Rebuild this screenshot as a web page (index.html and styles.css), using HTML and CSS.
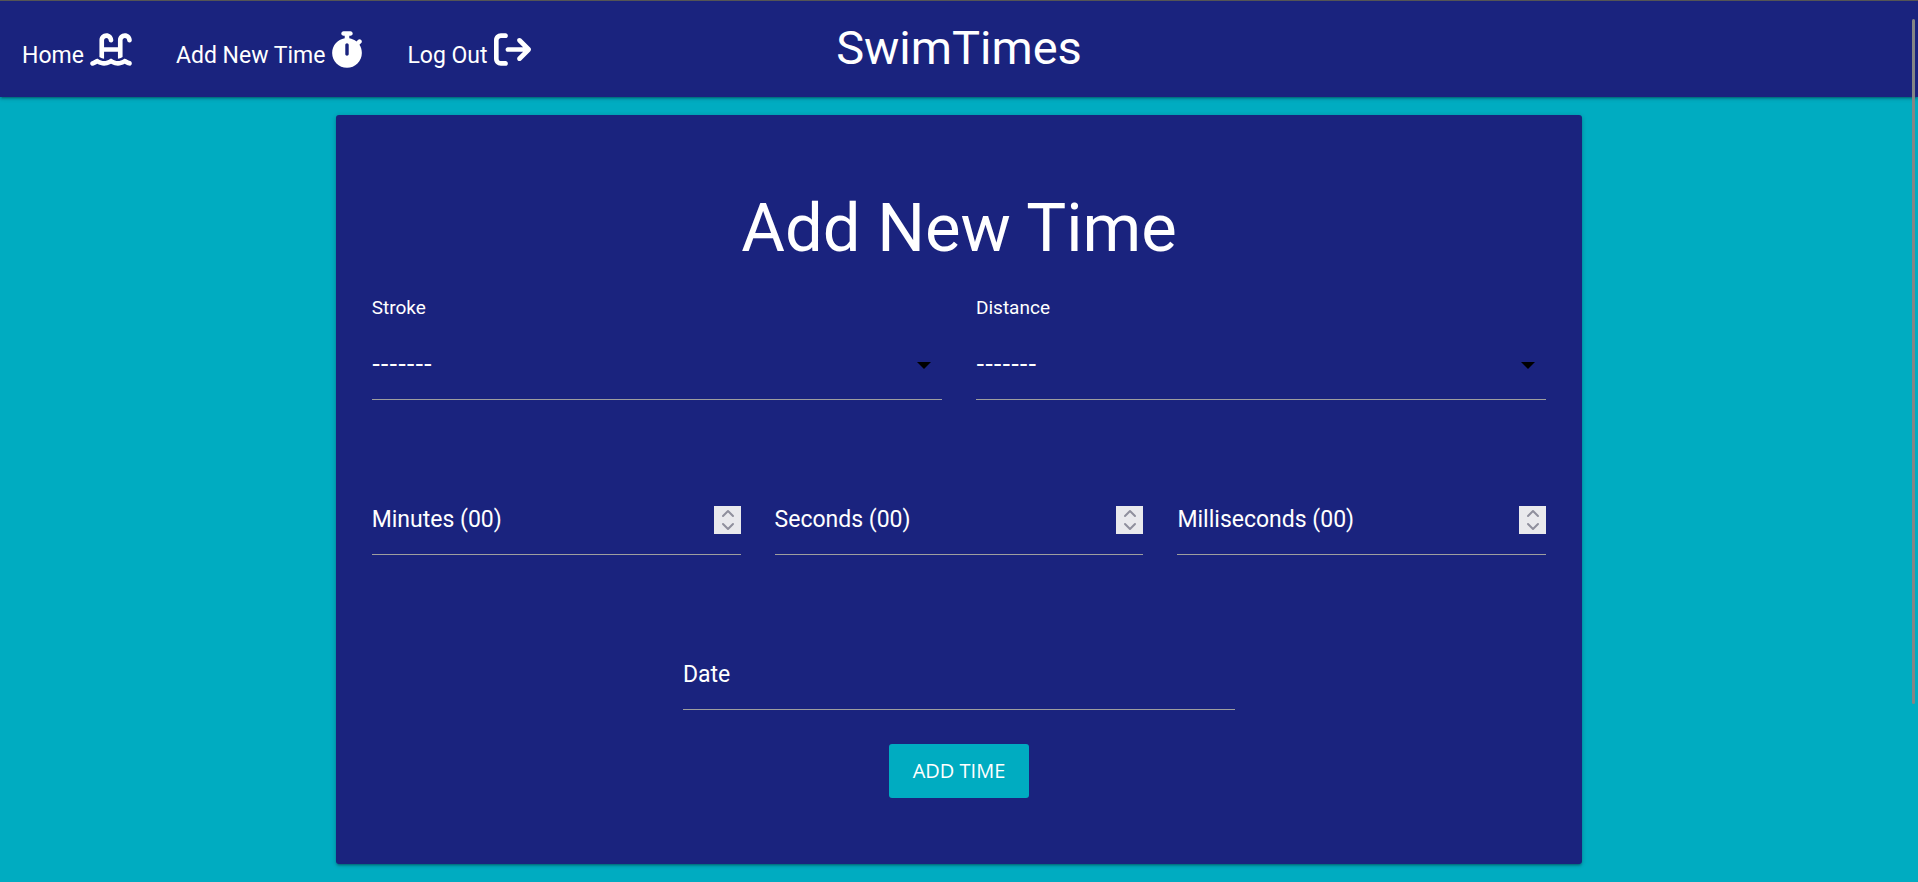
FILE: index.html
```html
<!DOCTYPE html>
<html lang="en">
<head>
<meta charset="utf-8">
<meta name="viewport" content="width=device-width, initial-scale=1">
<title>SwimTimes</title>
<link rel="stylesheet" href="styles.css">
</head>
<body>
<header class="navbar">
  <nav class="nav-links">
    <a href="#home">Home
      <svg class="icon icon-pool" viewBox="0 0 576 512" aria-hidden="true"><path d="M128 127.7C128 74.9 170.9 32 223.7 32c48.3 0 89 36 95 83.9l1 8.2c2.2 17.5-10.2 33.5-27.7 35.7s-33.5-10.2-35.7-27.7l-1-8.2c-2-15.9-15.5-27.9-31.5-27.9c-17.5 0-31.7 14.2-31.7 31.7V224H384V127.7C384 74.9 426.9 32 479.7 32c48.3 0 89 36 95 83.9l1 8.2c2.2 17.5-10.2 33.5-27.7 35.7s-33.5-10.2-35.7-27.7l-1-8.2c-2-15.9-15.5-27.9-31.5-27.9c-17.5 0-31.7 14.2-31.7 31.7V361c-1.6 1-3.3 2-4.8 3.1c-18 12.4-40.1 20.3-59.2 20.3V288H192v96.5c-19 0-41.2-7.9-59.1-20.3c-1.6-1.1-3.2-2.2-4.9-3.1V127.7zM306.5 389.9C329 405.4 356.5 416 384 416c26.9 0 55.4-10.8 77.4-26.1c11.9-8.5 28.1-7.8 39.2 1.7c14.4 11.9 32.5 21 50.6 25.2c17.2 4 27.9 21.2 23.9 38.4s-21.2 27.9-38.4 23.9c-24.5-5.7-44.9-16.5-58.2-25C449.5 469.7 417 480 384 480c-31.9 0-60.6-9.9-80.4-18.9c-5.8-2.7-11.1-5.3-15.6-7.7c-4.5 2.4-9.7 5.1-15.6 7.7c-19.8 9-48.5 18.9-80.4 18.9c-33 0-65.5-10.3-94.5-25.8c-13.4 8.4-33.7 19.3-58.2 25c-17.2 4-34.4-6.7-38.4-23.9s6.7-34.4 23.9-38.4c18.1-4.2 36.2-13.3 50.6-25.2c11.1-9.4 27.3-10.1 39.2-1.7C136.7 405.2 165.1 416 192 416c27.5 0 55-10.6 77.5-26.1c11.1-7.9 25.9-7.9 37 0z"/></svg>
    </a>
    <a href="#add">Add New Time
      <svg class="icon icon-watch" viewBox="0 0 448 512" aria-hidden="true"><path d="M176 0c-17.7 0-32 14.3-32 32s14.3 32 32 32h16V98.4C92.3 113.8 16 200 16 304c0 114.9 93.1 208 208 208s208-93.1 208-208c0-41.8-12.3-80.7-33.5-113.2l24.1-24.1c12.5-12.5 12.5-32.8 0-45.3s-32.8-12.5-45.3 0L355.7 143c-28.1-23-62.2-38.8-99.7-44.6V64h16c17.7 0 32-14.3 32-32s-14.3-32-32-32H224 176zm72 192V320c0 13.3-10.7 24-24 24s-24-10.7-24-24V192c0-13.3 10.7-24 24-24s24 10.7 24 24z"/></svg>
    </a>
    <a href="#logout">Log Out
      <svg class="icon icon-exit" viewBox="0 0 512 512" aria-hidden="true"><path d="M502.6 278.6c12.5-12.5 12.5-32.8 0-45.3l-128-128c-12.5-12.5-32.8-12.5-45.3 0s-12.5 32.8 0 45.3L402.7 224 192 224c-17.7 0-32 14.3-32 32s14.3 32 32 32l210.7 0-73.4 73.4c-12.5 12.5-12.5 32.8 0 45.3s32.8 12.5 45.3 0l128-128zM160 96c17.7 0 32-14.3 32-32s-14.3-32-32-32L96 32C43 32 0 75 0 128L0 384c0 53 43 96 96 96l64 0c17.7 0 32-14.3 32-32s-14.3-32-32-32l-64 0c-17.7 0-32-14.3-32-32l0-256c0-17.7 14.3-32 32-32l64 0z"/></svg>
    </a>
  </nav>
  <a class="brand" href="#home">SwimTimes</a>
</header>

<main class="card">
  <h1>Add New Time</h1>
  <form>
    <div class="row">
      <div class="select-field">
        <label for="stroke">Stroke</label>
        <div class="select-box"><select id="stroke"><option>-------</option></select></div>
      </div>
      <div class="select-field">
        <label for="distance">Distance</label>
        <div class="select-box"><select id="distance"><option>-------</option></select></div>
      </div>
    </div>
    <div class="row">
      <div class="field">
        <input type="number" id="minutes" min="0">
        <label for="minutes">Minutes (00)</label>
        <svg class="spinner" viewBox="0 0 27 28" aria-hidden="true"><path d="M9 10l5-5 5 5M9 18l5 5 5-5"/></svg>
      </div>
      <div class="field">
        <input type="number" id="seconds" min="0">
        <label for="seconds">Seconds (00)</label>
        <svg class="spinner" viewBox="0 0 27 28" aria-hidden="true"><path d="M9 10l5-5 5 5M9 18l5 5 5-5"/></svg>
      </div>
      <div class="field">
        <input type="number" id="milliseconds" min="0">
        <label for="milliseconds">Milliseconds (00)</label>
        <svg class="spinner" viewBox="0 0 27 28" aria-hidden="true"><path d="M9 10l5-5 5 5M9 18l5 5 5-5"/></svg>
      </div>
    </div>
    <div class="field date-field">
      <input type="text" id="date">
      <label for="date">Date</label>
    </div>
    <button class="submit" type="submit">ADD TIME</button>
  </form>
</main>
<div class="scroll-thumb" aria-hidden="true"></div>
</body>
</html>
```

FILE: styles.css
```css
:root {
  --indigo: #1a237e;
  --cyan: #00acc1;
  --line: #9e9e9e;
}

* {
  box-sizing: border-box;
}

body {
  margin: 0;
  background: var(--cyan);
  color: #fff;
  font-family: Roboto, "Noto Sans", sans-serif;
  font-size: 23px;
}

a {
  color: inherit;
  text-decoration: none;
}

.navbar {
  display: grid;
  grid-template-columns: 1fr auto 1fr;
  align-items: center;
  min-height: 97px;
  border-top: 1px solid #555;
  background: var(--indigo);
  box-shadow: 0 2px 2px rgba(0, 0, 0, .14), 0 3px 1px -2px rgba(0, 0, 0, .12), 0 1px 5px rgba(0, 0, 0, .2);
}

.nav-links {
  display: flex;
}

.nav-links a {
  display: flex;
  align-items: flex-end;
  gap: 6px;
  padding: 0 22px;
  line-height: 25px;
  white-space: nowrap;
}

.icon {
  height: 37px;
  fill: currentColor;
}

.icon-pool {
  width: 42px;
}

.icon-watch {
  width: 32px;
}

.icon-exit {
  width: 37px;
}

.brand {
  padding-bottom: 4px;
  font-size: 47px;
}

.card {
  width: 65%;
  margin: 18px auto 16px;
  padding: 74px 36px 66px;
  border-radius: 3px;
  background: var(--indigo);
  box-shadow: 0 2px 2px rgba(0, 0, 0, .14), 0 3px 1px -2px rgba(0, 0, 0, .12), 0 1px 5px rgba(0, 0, 0, .2);
}

h1 {
  margin: 0 0 30px;
  font-size: 67px;
  font-weight: 400;
  line-height: 78px;
  text-align: center;
}

.row {
  display: flex;
  gap: 34px;
  margin-bottom: 87px;
}

.row > * {
  flex: 1;
}

.select-field label {
  display: block;
  margin-bottom: 14px;
  font-size: 19px;
  line-height: 21px;
}

.select-box {
  position: relative;
}

.select-box::after {
  content: "";
  position: absolute;
  top: 50%;
  right: 11px;
  margin-top: -4px;
  border: 7px solid transparent;
  border-top-color: #000;
  border-bottom: 0;
  pointer-events: none;
}

select,
input {
  width: 100%;
  height: 68px;
  margin: 0;
  padding: 0;
  border: 0;
  border-bottom: 1px solid var(--line);
  border-radius: 0;
  outline: 0;
  appearance: none;
  background: transparent;
  color: inherit;
  font: inherit;
}

select {
  display: block;
  padding-bottom: 3px;
  font-family: "DejaVu Sans", sans-serif;
  font-size: 24px;
}

option {
  color: #000;
}

input[type="number"] {
  appearance: textfield;
}

.field {
  display: grid;
  align-items: center;
}

.field > * {
  grid-area: 1 / 1;
}

.field label {
  justify-self: start;
  margin-bottom: 4px;
  cursor: text;
}

.spinner {
  justify-self: end;
  width: 27px;
  height: 28px;
  margin-bottom: 2px;
  background: #e9e9ed;
  fill: none;
  stroke: #8f8f9d;
  stroke-width: 2;
  stroke-linecap: round;
  stroke-linejoin: round;
}

.date-field {
  width: 47%;
  margin: 0 auto 34px;
}

.submit {
  display: block;
  margin: 0 auto;
  padding: 12px 24px;
  border: 0;
  border-radius: 3px;
  background: var(--cyan);
  color: #fff;
  font-family: "Open Sans", sans-serif;
  font-size: 20px;
  line-height: 30px;
}

.scroll-thumb {
  position: fixed;
  top: 19px;
  right: 3px;
  width: 3px;
  height: 685px;
  border-radius: 2px;
  background: #858585;
}
```
